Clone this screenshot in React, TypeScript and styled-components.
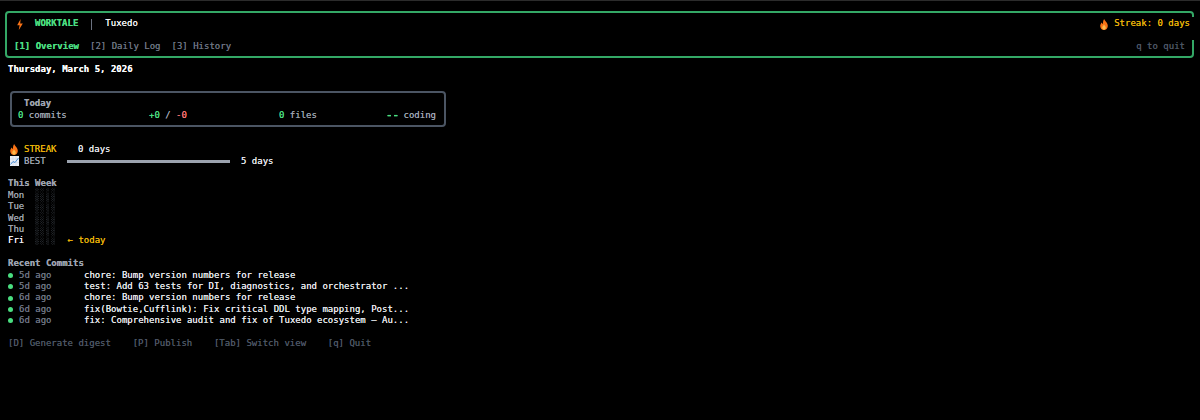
import React from 'react';
import styled, { createGlobalStyle } from 'styled-components';

const GlobalStyle = createGlobalStyle`
  html, body {
    margin: 0;
    padding: 0;
    background: #000;
  }
`;

const Screen = styled.div`
  position: relative;
  width: 1200px;
  height: 420px;
  overflow: hidden;
  background: #000;
  border-top: 1px solid #2b2b2b;
  box-sizing: border-box;
  padding: 10px 6px 0 5px;
  font-family: 'DejaVu Sans Mono', monospace;
  font-size: 9px;
  line-height: 11.4px;
  color: #e5e7eb;
  white-space: pre;
  text-shadow: 0 0 0.6px currentColor;
`;

const TopNotch = styled.span`
  position: absolute;
  top: -1px;
  left: 345px;
  width: 133px;
  height: 1px;
  background: #000;
`;

const Header = styled.header`
  position: relative;
  height: 47px;
  box-sizing: border-box;
  border: 2px solid #34a866;
  border-radius: 4px;
  padding: 5.3px 2px 3.3px 7px;
  display: flex;
  flex-direction: column;
  justify-content: space-between;
`;

const BorderGap = styled.span`
  position: absolute;
  right: -2px;
  top: 4px;
  width: 2px;
  height: 23px;
  background: #000;
`;

const HeaderRow = styled.div`
  display: flex;
  align-items: center;
  justify-content: space-between;
`;

const Brand = styled.div`
  display: flex;
  align-items: center;
  padding-left: 3px;
`;

const BrandName = styled.span`
  margin-left: 12px;
  color: #4ade80;
  font-weight: 700;
`;

const Divider = styled.span`
  width: 1px;
  height: 11px;
  background: #6b7280;
  margin: 0 13px;
`;

const Project = styled.span`
  color: #f3f4f6;
`;

const StreakBadge = styled.div`
  display: flex;
  align-items: center;
  gap: 6px;
  color: #eab308;
`;

const Tabs = styled.nav`
  display: flex;
  gap: 11px;
`;

const Tab = styled.span<{ $active?: boolean }>`
  color: ${p => (p.$active ? '#4ade80' : '#6b7280')};
  font-weight: ${p => (p.$active ? 700 : 400)};
`;

const QuitHint = styled.span`
  color: #4b5563;
  padding-right: 5px;
`;

const Body = styled.main`
  padding-left: 3px;
`;

const DateLine = styled.div`
  margin-top: 6.3px;
  color: #f9fafb;
  font-weight: 700;
`;

const TodayCard = styled.section`
  width: 436px;
  height: 36px;
  box-sizing: border-box;
  margin: 15.3px 0 0 2px;
  border: 2px solid #4b5563;
  border-radius: 4px;
  padding: 5.3px 8px 0 6px;
`;

const CardTitle = styled.div`
  padding-left: 6px;
  color: #9ca3af;
  font-weight: 700;
`;

const StatRow = styled.div`
  display: grid;
  grid-template-columns: 131px 130px 1fr auto;
`;

const Muted = styled.span`
  color: #9ca3af;
`;

const Green = styled.span`
  color: #4ade80;
`;

const CodingDash = styled(Green)`
  display: inline-block;
  font-weight: 700;
  transform: scaleX(1.2);
`;

const Red = styled.span`
  color: #f87171;
`;

const StreakBlock = styled.section`
  margin-top: 17.3px;
`;

const MetricRow = styled.div`
  display: flex;
  align-items: center;
  height: 11.4px;
`;

const IconSlot = styled.span`
  width: 16px;
  padding-left: 2px;
  box-sizing: border-box;
  display: flex;
  align-items: center;
`;

const MetricLabel = styled.span<{ $gold?: boolean }>`
  width: ${p => (p.$gold ? '54px' : '43px')};
  color: ${p => (p.$gold ? '#eab308' : '#9ca3af')};
`;

const Value = styled.span`
  color: #e5e7eb;
`;

const BestBar = styled.span`
  width: 163px;
  height: 3px;
  margin-right: 11px;
  background: #9ca3af;
`;

const SectionHeading = styled.div`
  color: #9ca3af;
  font-weight: 700;
`;

const WeekBlock = styled.section`
  margin-top: 11.3px;
`;

const DayRow = styled.div`
  height: 11.4px;
`;

const DayName = styled.span<{ $today?: boolean }>`
  color: ${p => (p.$today ? '#f3f4f6' : '#9ca3af')};
`;

const Shade = styled.span`
  display: inline-block;
  height: 11.4px;
  vertical-align: top;
  font-family: 'Liberation Mono', monospace;
  color: transparent;
  background: repeating-linear-gradient(90deg, #66707f 0 3.6px, transparent 3.6px 5.42px);
  -webkit-background-clip: text;
  background-clip: text;
  transform: scaleY(1.3);
`;

const TodayMark = styled.span`
  color: #eab308;
`;

const CommitsBlock = styled.section`
  margin-top: 11.4px;
`;

const CommitRow = styled.div`
  display: flex;
  align-items: center;
  height: 11.4px;
`;

const CommitDot = styled.span`
  width: 5px;
  height: 5px;
  margin: 0 6px 0 0;
  border-radius: 50%;
  background: #4ade80;
`;

const CommitAge = styled.span`
  width: 65px;
  color: #6b7280;
`;

const CommitMessage = styled.span`
  color: #e5e7eb;
`;

const Footer = styled.footer`
  margin-top: 11.4px;
  color: #4b5563;
  display: flex;
  gap: 21.7px;
`;

const Flame = () => (
  <svg width="8" height="11" viewBox="0 0 8 11">
    <path d="M4.2 0C4.8 1.8 7.8 3.8 7.8 6.9 7.8 9.2 6.1 11 4 11S.2 9.2.2 6.9C.2 5.3 1.2 4.1 1.8 3.4 2 4.3 2.4 4.7 3 4.8 2.9 3.1 3.2 1.3 4.2 0Z" fill="#f97316" />
    <path d="M4 5.6C4.6 6.8 5.8 7.4 5.8 8.8 5.8 9.9 5 10.7 4 10.7S2.2 9.9 2.2 8.8C2.2 7.5 3.6 6.8 4 5.6Z" fill="#fdba4d" />
  </svg>
);

const ChartIcon = () => (
  <svg width="9" height="10" viewBox="0 0 9 10">
    <rect width="9" height="10" fill="#e9edf5" />
    <path d="M0 3H9M0 6.5H9M3 0V10M6 0V10" stroke="#c3cee0" strokeWidth=".5" />
    <path d="M.5 8.5 3 5.5 5 6.5 8.5 2" fill="none" stroke="#4a90d9" strokeWidth="1" />
  </svg>
);

const Bolt = () => (
  <svg width="6" height="11" viewBox="0 0 6 11">
    <path d="M3.6 0 .2 6.2H2.6L1.8 11 5.8 4.4H3.2Z" fill="#f97316" />
  </svg>
);

const days = ['Mon', 'Tue', 'Wed', 'Thu', 'Fri'];

const commits = [
  ['5d ago', 'chore: Bump version numbers for release'],
  ['5d ago', 'test: Add 63 tests for DI, diagnostics, and orchestrator ...'],
  ['6d ago', 'chore: Bump version numbers for release'],
  ['6d ago', 'fix(Bowtie,Cufflink): Fix critical DDL type mapping, Post...'],
  ['6d ago', 'fix: Comprehensive audit and fix of Tuxedo ecosystem \u2013 Au...'],
];

export default function App() {
  return (
    <>
      <GlobalStyle />
      <Screen>
        <TopNotch />
        <Header>
          <BorderGap />
          <HeaderRow>
            <Brand>
              <Bolt />
              <BrandName>WORKTALE</BrandName>
              <Divider />
              <Project>Tuxedo</Project>
            </Brand>
            <StreakBadge>
              <Flame />
              <span>Streak: 0 days</span>
            </StreakBadge>
          </HeaderRow>
          <HeaderRow>
            <Tabs>
              <Tab $active>[1] Overview</Tab>
              <Tab>[2] Daily Log</Tab>
              <Tab>[3] History</Tab>
            </Tabs>
            <QuitHint>q to quit</QuitHint>
          </HeaderRow>
        </Header>

        <Body>
          <DateLine>Thursday, March 5, 2026</DateLine>

          <TodayCard>
            <CardTitle>Today</CardTitle>
            <StatRow>
              <span><Green>0</Green> <Muted>commits</Muted></span>
              <span><Green>+0</Green> <Muted>/</Muted> <Red>-0</Red></span>
              <span><Green>0</Green> <Muted>files</Muted></span>
              <span><CodingDash>--</CodingDash> <Muted>coding</Muted></span>
            </StatRow>
          </TodayCard>

          <StreakBlock>
            <MetricRow>
              <IconSlot><Flame /></IconSlot>
              <MetricLabel $gold>STREAK</MetricLabel>
              <Value>0 days</Value>
            </MetricRow>
            <MetricRow>
              <IconSlot><ChartIcon /></IconSlot>
              <MetricLabel>BEST</MetricLabel>
              <BestBar />
              <Value>5 days</Value>
            </MetricRow>
          </StreakBlock>

          <WeekBlock>
            <SectionHeading>This Week</SectionHeading>
            {days.map(day => (
              <DayRow key={day}>
                <DayName $today={day === 'Fri'}>{day}</DayName>
                {'  '}
                <Shade>░░░░</Shade>
                {day === 'Fri' && <TodayMark>{'  '}← today</TodayMark>}
              </DayRow>
            ))}
          </WeekBlock>

          <CommitsBlock>
            <SectionHeading>Recent Commits</SectionHeading>
            {commits.map(([age, message], i) => (
              <CommitRow key={i}>
                <CommitDot />
                <CommitAge>{age}</CommitAge>
                <CommitMessage>{message}</CommitMessage>
              </CommitRow>
            ))}
          </CommitsBlock>

          <Footer>
            <span>[D] Generate digest</span>
            <span>[P] Publish</span>
            <span>[Tab] Switch view</span>
            <span>[q] Quit</span>
          </Footer>
        </Body>
      </Screen>
    </>
  );
}
